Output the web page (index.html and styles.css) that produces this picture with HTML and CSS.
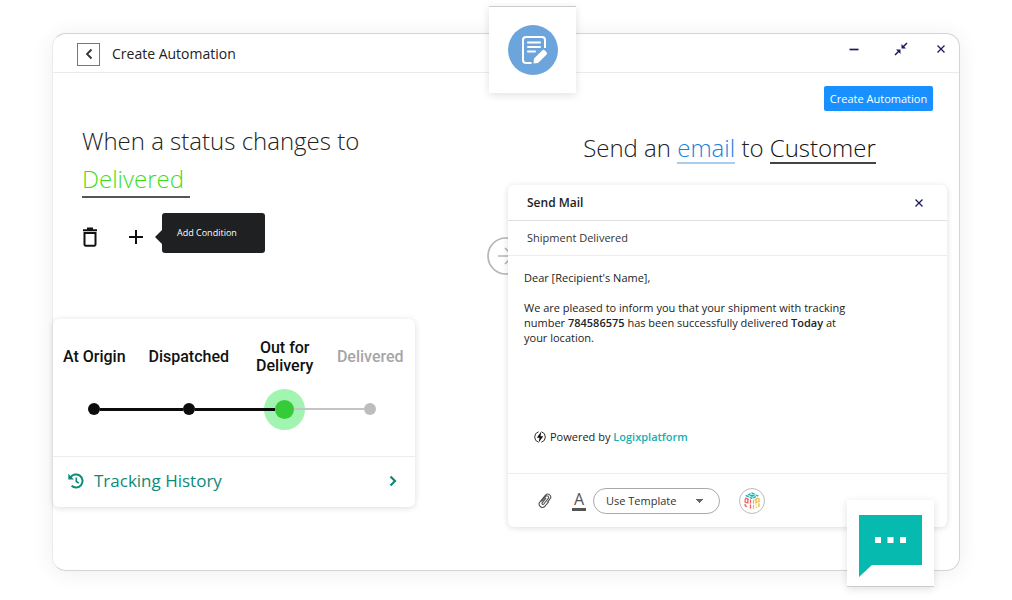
FILE: index.html
```html
<!DOCTYPE html>
<html lang="en">
<head>
  <meta charset="UTF-8">
  <meta name="viewport" content="width=device-width, initial-scale=1">
  <title>Create Automation</title>
  <link rel="stylesheet" href="styles.css">
</head>
<body>
  <main class="window">
    <header class="window-header">
      <button class="back" aria-label="Back">
        <svg width="8" height="12" viewBox="0 0 8 12"><path d="M6.500 1.500L2 6l4.500 4.500" fill="none" stroke="#333" stroke-width="1.800"/></svg>
      </button>
      <h1>Create Automation</h1>
      <div class="window-controls">
        <button aria-label="Minimize">
          <svg width="12" height="12" viewBox="0 0 12 12"><path d="M1.500 6.500h9" stroke="#1b1b62" stroke-width="1.700"/></svg>
        </button>
        <button aria-label="Shrink">
          <svg width="14" height="14" viewBox="0 0 14 14"><path d="M13 1L9 5M1 13l4-4" stroke="#1b1b62" stroke-width="1.500"/><path d="M7.500 2v4.500H12zM6.500 12V7.500H2z" fill="#1b1b62"/></svg>
        </button>
        <button aria-label="Close">
          <svg width="10" height="10" viewBox="0 0 10 10"><path d="M1.500 1.500l7 7M8.500 1.500l-7 7" stroke="#1b1b62" stroke-width="1.300"/></svg>
        </button>
      </div>
    </header>

    <div class="columns">
      <!-- Trigger -->
      <section class="trigger">
        <h2>When a status changes to<br><a class="status" href="#">Delivered</a></h2>
        <div class="condition">
          <button aria-label="Delete">
            <svg width="16" height="20" viewBox="0 0 16 20"><path d="M1 3.200h14M5 1.600h6" stroke="#111" stroke-width="2"/><path d="M2.500 6h11v11.500a1.200 1.200 0 0 1-1.200 1.200H3.700a1.200 1.200 0 0 1-1.200-1.200z" fill="none" stroke="#111" stroke-width="2"/></svg>
          </button>
          <button aria-label="Add" aria-describedby="add-tip">
            <svg width="14" height="14" viewBox="0 0 14 14"><path d="M7 0v14M0 7h14" stroke="#111" stroke-width="2"/></svg>
          </button>
          <span class="tooltip" id="add-tip" role="tooltip">Add Condition</span>
        </div>

        <div class="panel tracking">
          <ol class="steps">
            <li class="done"><span class="label">At Origin</span><span class="marker"><i></i></span></li>
            <li class="done"><span class="label">Dispatched</span><span class="marker"><i></i></span></li>
            <li class="current"><span class="label">Out for Delivery</span><span class="marker"><i></i></span></li>
            <li><span class="label">Delivered</span><span class="marker"><i></i></span></li>
          </ol>
          <a class="history" href="#">
            <svg width="16" height="16" viewBox="0 0 16 16" fill="none" stroke="#0c8a78" stroke-width="2"><path d="M2.500 4.500A6.500 6.500 0 1 1 3.600 12.700"/><path d="M8.300 4.500V8.500l2.500 1.500" stroke-width="1.600"/><path d="M0.300 0.800v5.700h5.700z" fill="#0c8a78" stroke="none"/></svg>
            <span>Tracking History</span>
            <svg width="8" height="12" viewBox="0 0 8 12"><path d="M1.500 1.500L6 6l-4.500 4.500" fill="none" stroke="#0c8a78" stroke-width="2.200"/></svg>
          </a>
        </div>
      </section>

      <!-- Action -->
      <section class="action">
        <button class="create">Create Automation</button>
        <h2>Send an <a class="channel" href="#">email</a> to <a class="recipient" href="#">Customer</a></h2>
        <div class="mail-wrap">
          <svg class="connector" width="38" height="38" viewBox="0 0 38 38" fill="none" stroke="#b5b5b5" stroke-width="1.700"><circle cx="19" cy="19" r="18"/><path d="M11 19h16M18 11l8 8-8 8"/></svg>
          <form class="panel mail">
            <div class="mail-header">
              <h3>Send Mail</h3>
              <button type="button" aria-label="Close mail">
                <svg width="10" height="10" viewBox="0 0 10 10"><path d="M1.500 1.500l7 7M8.500 1.500l-7 7" stroke="#1b1b62" stroke-width="1.300"/></svg>
              </button>
            </div>
            <input class="subject" type="text" aria-label="Subject" value="Shipment Delivered">
            <div class="message">
              <p>Dear [Recipient's Name],</p>
              <p>We are pleased to inform you that your shipment with tracking number <b>784586575</b> has been successfully delivered <b>Today</b> at your location.</p>
              <div class="powered">
                <svg width="12" height="12" viewBox="0 0 12 12"><path d="M4.600 0.800a5.400 5.400 0 0 0 0 10.400M7.400 0.800a5.400 5.400 0 0 1 0 10.400" fill="none" stroke="#333" stroke-width="1"/><path d="M7.300 0.500L2.800 6.700h2.700L4.700 11.500l4.500-6.200H6.500z" fill="#111"/></svg>
                <span>Powered by <a href="#">Logixplatform</a></span>
              </div>
            </div>
            <div class="toolbar">
              <button type="button" class="attach" aria-label="Attach file">
                <svg width="14" height="16" viewBox="0 0 14 16"><path d="M3.500 8.500L7.800 3.400a1.600 1.600 0 0 1 2.500 2L5.800 11a1 1 0 0 1-1.600-1.200L8 5.200M10.800 8.700L7 13.200a3.300 3.300 0 0 1-5-4.400L7.500 2.200a2.900 2.900 0 0 1 4.500 3.700L9.500 9.200" fill="none" stroke="#555" stroke-width="1.100"/></svg>
              </button>
              <button type="button" class="color" aria-label="Text color">A</button>
              <select aria-label="Template">
                <option>Use Template</option>
              </select>
              <button type="button" class="cube" aria-label="Logixplatform">
                <svg width="16" height="18" viewBox="0 0 16 18" fill="none" stroke-width="1.300"><path d="M8 1l5.500 2.700L8 6.500 2.500 3.700z" stroke="#12b5b5" stroke-dasharray="3 1"/><path d="M5.500 3.700h5M8 2.500v3" stroke="#12b5b5"/><path d="M6.500 16.500V8.200L1.200 5.800v8l2.500 1.200M3.800 7.500v5M1.200 10l2.600 1" stroke="#ee6262" stroke-dasharray="4 1"/><path d="M9.500 16.800V8.200L15 5.800V14l-3 1.500M12 7.500v5.800M12 10.500l3-1" stroke="#f0b93a" stroke-dasharray="4 1"/></svg>
              </button>
            </div>
          </form>
        </div>
      </section>
    </div>

    <div class="tile tile-form">
      <svg width="50" height="50" viewBox="0 0 50 50"><circle cx="25" cy="25" r="25" fill="#6ca5dc"/><g fill="none" stroke="#fff" stroke-width="2"><path d="M37 23V15a3 3 0 0 0-3-3H18a3 3 0 0 0-3 3v20a3 3 0 0 0 3 3h5.500"/><path d="M20 17.500h12M20 22h12M20 26.500h7" stroke-linecap="round"/></g><path d="M25.500 38.500l0.500-5 8.200-8a2 2 0 0 1 2.800 0l1.400 1.400a2 2 0 0 1 0 2.800l-8.400 8.300z" fill="#fff"/></svg>
    </div>
    <button class="tile tile-chat" aria-label="Open chat">
      <svg width="63" height="62" viewBox="0 0 63 62"><path d="M0 0h63v50H13L0 62z" fill="#06bab0"/><path d="M16 22h6v6h-6zM28.500 22h6v6h-6zM41 22h6v6h-6z" fill="#fff"/></svg>
    </button>
  </main>
</body>
</html>
```
FILE: styles.css
```css
* {
  box-sizing: border-box;
}
body {
  margin: 0;
  padding: 33px 52px 29px 52px;
  font-family: 'Segoe UI', 'Open Sans', sans-serif;
  background: #fff;
  color: #222;
}
h1, h2, h3, p, ol {
  margin: 0;
  padding: 0;
}
h2 {
  font-size: 24px;
  font-weight: 300;
}
a {
  color: inherit;
  text-decoration: none;
}
button {
  padding: 0;
  border: none;
  background: none;
  font-family: inherit;
  cursor: pointer;
}
svg {
  display: block;
}
.window {
  position: relative;
  background: #fff;
  border: 1px solid #d4d4d4;
  border-left-color: #ececec;
  border-radius: 14px;
  box-shadow: 0 2px 22px rgba(0, 0, 0, 0.07);
}
.window-header {
  display: flex;
  align-items: center;
  height: 39px;
  padding: 2px 13px 0 24px;
  border-bottom: 1px solid #ebebeb;
}
.back {
  display: flex;
  align-items: center;
  justify-content: center;
  width: 23px;
  height: 23px;
  border: 1px solid #777;
}
h1 {
  margin-left: 12px;
  font-size: 14px;
  font-weight: 400;
  line-height: 20px;
}
.window-controls {
  display: flex;
  align-self: flex-start;
  align-items: center;
  gap: 34px;
  height: 26px;
  margin-left: auto;
}
.window-controls button:last-child {
  margin-left: -6px;
}
.columns {
  display: grid;
  grid-template-columns: minmax(0, 1fr) minmax(0, 439px);
  padding-right: 12px;
}

/* Trigger */
.trigger h2 {
  padding: 49px 0 0 29px;
  line-height: 38px;
}
.status {
  display: inline-block;
  padding-right: 6px;
  border-bottom: 2px solid #555;
  line-height: 34px;
  color: #3fdc1c;
}
.condition {
  display: flex;
  align-items: center;
  gap: 31px;
  padding: 15px 0 0 29px;
}
.condition button {
  padding-top: 8px;
}
.tooltip {
  position: relative;
  width: 103px;
  margin-left: -12px;
  padding: 0 15px;
  border-radius: 3px;
  background: #1e2022;
  color: #fff;
  font-size: 9px;
  line-height: 40px;
}
.tooltip::before {
  content: "";
  position: absolute;
  top: 17px;
  left: -7px;
  border: 7px solid transparent;
  border-left: none;
  border-right-color: #1e2022;
}
.panel {
  background: #fff;
  border-radius: 6px;
  box-shadow: 0 1px 6px rgba(0, 0, 0, 0.14);
}
.tracking {
  width: 362px;
  max-width: 100%;
  margin-top: 66px;
}
.steps {
  display: grid;
  grid-template-columns: 79fr 111fr 82fr 90fr;
  height: 138px;
  padding: 18px 0 0 2px;
  border-bottom: 1px solid #ececec;
  font-family: Roboto, sans-serif;
  font-size: 16px;
  font-weight: 500;
  line-height: 18px;
  list-style: none;
  color: #111;
}
.label {
  display: flex;
  align-items: center;
  justify-content: center;
  height: 40px;
  text-align: center;
}
.marker {
  display: flex;
  align-items: center;
  height: 64px;
}
.marker::before,
.marker::after {
  content: "";
  position: relative;
  z-index: 1;
  flex: 1;
  height: 2px;
  background: #c4c4c4;
}
.marker i {
  width: 12px;
  height: 12px;
  border-radius: 50%;
  background: #bdbdbd;
}
.done .marker i,
.done .marker::before,
.done .marker::after,
.current .marker::before {
  background: #0c0c0c;
}
.done .marker::before,
.done .marker::after,
.current .marker::before {
  height: 3px;
}
.current .marker i {
  width: 19px;
  height: 19px;
  background: #36cb38;
  box-shadow: 0 0 0 11px #a2f5b0;
}
.steps li:first-child .marker::before,
.steps li:last-child .marker::after {
  background: none;
}
.steps li:last-child .label {
  color: #a6a6a6;
}
.history {
  display: flex;
  align-items: center;
  height: 50px;
  padding: 0 18px 3px 15px;
  color: #0c8a78;
  font-size: 17px;
}
.history span {
  flex: 1;
  margin-left: 10px;
}

/* Action */
.action {
  display: flex;
  flex-direction: column;
}
.create {
  align-self: flex-end;
  width: 109px;
  height: 25px;
  margin: 13px 14px 0 0;
  border-radius: 2px;
  background: #1890ff;
  color: #fff;
  font-size: 11px;
}
.action h2 {
  padding: 19px 0 0 4px;
  line-height: 36px;
  text-align: center;
}
.channel,
.recipient {
  display: inline-block;
  border-bottom: 2px solid #444;
  line-height: 28px;
  color: #111;
}
.channel {
  border-color: #a9cdf0;
  color: #1d7fdc;
}
.mail-wrap {
  position: relative;
  margin: 19px 0 43px;
}
.connector {
  position: absolute;
  top: 52px;
  left: -21px;
}
.mail {
  position: relative;
  font-size: 11px;
}
.mail-header {
  display: flex;
  align-items: center;
  justify-content: space-between;
  height: 36px;
  padding: 0 23px 0 19px;
  border-bottom: 1px solid #e0e0e0;
}
h3 {
  font-size: 12px;
  font-weight: 600;
}
.subject {
  display: block;
  width: 100%;
  height: 35px;
  padding: 0 19px 2px;
  border: none;
  border-bottom: 1px solid #ececec;
  background: none;
  color: #333;
  font: inherit;
}
.message {
  height: 217px;
  padding: 14px 100px 0 16px;
  line-height: 15px;
}
.message p {
  margin-bottom: 15px;
}
.message b {
  font-weight: 600;
}
.powered {
  display: flex;
  align-items: center;
  gap: 4px;
  margin: 84px 0 0 10px;
}
.powered a {
  color: #12b0b0;
  font-weight: 600;
}
.toolbar {
  display: flex;
  align-items: center;
  height: 54px;
  padding-left: 30px;
  border-top: 1px solid #ececec;
}
.color {
  width: 14px;
  margin: 0 7px 0 20px;
  border-bottom: 3px solid #555;
  color: #555;
  font-size: 16px;
  line-height: 18px;
}
select {
  width: 127px;
  height: 26px;
  padding: 0 12px;
  appearance: none;
  border: 1px solid #aaa;
  border-radius: 13px;
  background-image: linear-gradient(to bottom left, #666 50%, transparent 50%), linear-gradient(to bottom right, #666 50%, transparent 50%);
  background-position: right 19px center, right 15px center;
  background-size: 4px 4px;
  background-repeat: no-repeat;
  background-color: #fff;
  color: #333;
  font: inherit;
}
.cube {
  display: flex;
  align-items: center;
  justify-content: center;
  width: 26px;
  height: 26px;
  margin-left: 19px;
  border: 1px solid #bbb;
  border-radius: 50%;
}

/* Floating tiles */
.tile {
  position: absolute;
  display: flex;
  align-items: center;
  justify-content: center;
  width: 87px;
  height: 87px;
  background: #fff;
  box-shadow: 0 2px 8px rgba(0, 0, 0, 0.12);
}
.tile-form {
  top: -28px;
  left: calc(50% - 17px);
  border-top: 1px solid #ccc;
}
.tile-chat {
  right: 25px;
  bottom: -17px;
  padding-top: 6px;
  border-bottom: 1px solid #ccc;
}
```
